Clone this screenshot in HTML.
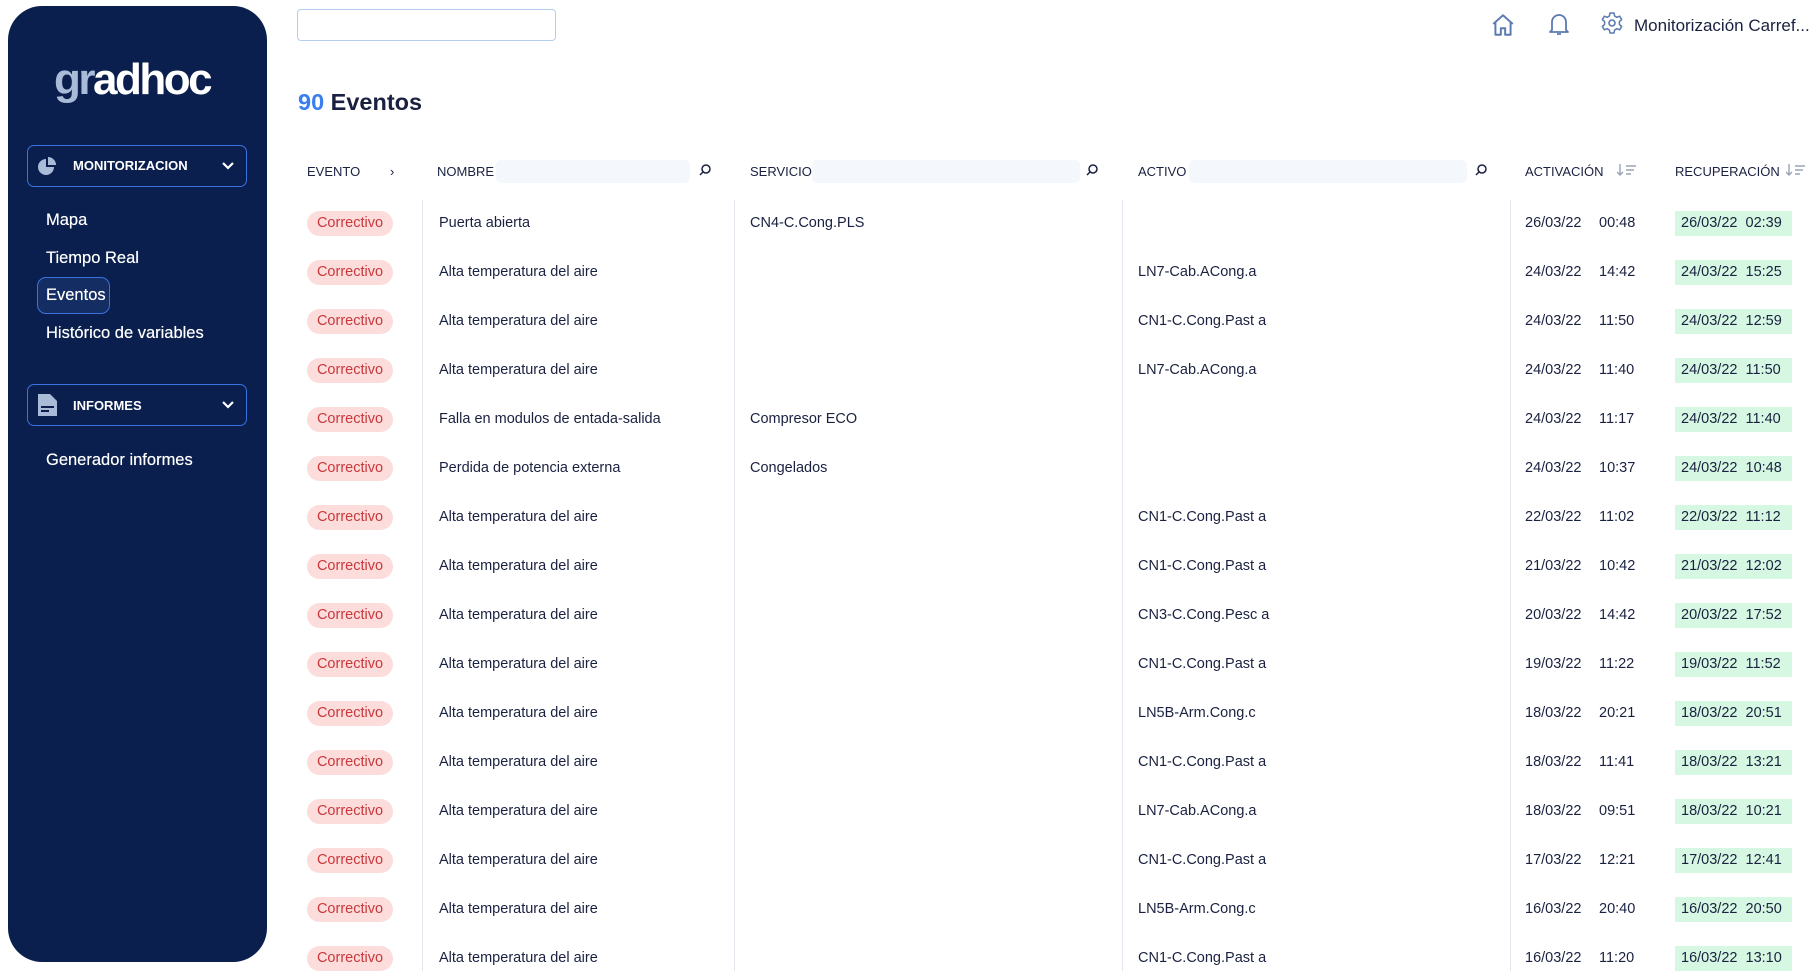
<!DOCTYPE html>
<html><head><meta charset="utf-8"><style>
*{margin:0;padding:0;box-sizing:border-box}
body{width:1819px;height:971px;overflow:hidden;background:#fff;font-family:"Liberation Sans",sans-serif;color:#1a2140;position:relative}
.a{position:absolute;white-space:nowrap}
#sb{position:absolute;left:8px;top:6px;width:259px;height:956px;background:#0a1f4e;border-radius:34px}
.btn{position:absolute;left:27px;width:220px;height:42px;border:1.5px solid #3a72e0;border-radius:7px;color:#fff;font-weight:bold;font-size:13px}
.nav{position:absolute;left:46px;color:#fff;font-size:16.5px;text-shadow:0 0 0.4px #fff}
.hd{font-size:13px;color:#1a2140;top:164px}
.fi{position:absolute;top:160px;height:23px;background:#f4f7fb;border-radius:5px}
.si{position:absolute;top:163px}
.vl{position:absolute;top:200px;width:1px;height:771px;background:#e3e6ec}
.row{position:absolute;left:0;width:1819px;height:26px;font-size:14.5px}
.row span{position:absolute;top:4px}
.bad{position:absolute;left:307px;top:0;width:86px;height:25px;border-radius:13px;background:#fddcdc;color:#c9383a;text-align:center;line-height:25px;font-size:14.5px}
.rec{position:absolute;left:1675px;top:0;height:25px;background:#d6f8e2;line-height:25px;padding-left:6px;width:117px}
</style></head><body>
<div id="sb"></div>
<div class="a" style="left:54px;top:55px;font-size:44px;font-weight:bold;color:#fff;letter-spacing:-2.5px"><span style="color:#a9bbd6">gr</span>adhoc</div>
<div class="btn" style="top:145px">
<svg class="a" style="left:9px;top:10px" width="20" height="20" viewBox="0 0 20 20"><path d="M9 3A8 8 0 1 0 17 11H9Z" fill="#a9bbd6"/><path d="M11 1A8 8 0 0 1 19 9H11Z" fill="#a9bbd6"/></svg>
<span class="a" style="left:45px;top:12px">MONITORIZACION</span>
<svg class="a" style="left:193px;top:14px" width="14" height="12" viewBox="0 0 14 12"><path d="M2 3l5 5 5-5" stroke="#fff" stroke-width="2.2" fill="none"/></svg></div>
<div class="nav" style="top:211px">Mapa</div>
<div class="nav" style="top:249px">Tiempo Real</div>
<div class="a" style="left:37px;top:277px;width:73px;height:37px;border:1.5px solid #3a72e0;border-radius:9px;background:#142d63"></div>
<div class="nav" style="top:286px">Eventos</div>
<div class="nav" style="top:324px">Histórico de variables</div>
<div class="btn" style="top:384px">
<svg class="a" style="left:10px;top:9px" width="20" height="22" viewBox="0 0 20 22"><path d="M0 0h12l7 7v15H0Z" fill="#a9bbd6"/><path d="M3 13h13M3 17h8" stroke="#0a1f4e" stroke-width="2"/></svg>
<span class="a" style="left:45px;top:13px">INFORMES</span>
<svg class="a" style="left:193px;top:14px" width="14" height="12" viewBox="0 0 14 12"><path d="M2 3l5 5 5-5" stroke="#fff" stroke-width="2.2" fill="none"/></svg></div>
<div class="nav" style="top:451px">Generador informes</div>

<div class="a" style="left:297px;top:9px;width:259px;height:32px;border:1.5px solid #b3cdef;border-radius:4px"></div>
<svg class="a" style="left:1490px;top:12px" width="26" height="26" viewBox="0 0 24 24"><path d="M3 11L12 3l9 8M5 9v12h5v-6h4v6h5V9" stroke="#5a7ab0" stroke-width="1.8" fill="none" stroke-linejoin="round"/></svg>
<svg class="a" style="left:1547px;top:11px" width="24" height="26" viewBox="0 0 24 26"><path d="M5 19V11a7 7 0 0 1 14 0v8l2 2H3ZM10 23h4" stroke="#5a7ab0" stroke-width="1.8" fill="none" stroke-linejoin="round"/></svg>
<svg class="a" style="left:1600px;top:11px" width="24" height="24" viewBox="0 0 24 24"><circle cx="12" cy="12" r="3" stroke="#5a7ab0" stroke-width="1.6" fill="none"/><path d="M10 2h4l.6 3 2.3 1.3 2.8-1.1 2 3.4-2.3 2v2.8l2.3 2-2 3.4-2.8-1.1-2.3 1.3L14 22h-4l-.6-3-2.3-1.3-2.8 1.1-2-3.4 2.3-2v-2.8l-2.3-2 2-3.4 2.8 1.1L9.4 5Z" stroke="#5a7ab0" stroke-width="1.5" fill="none" stroke-linejoin="round"/></svg>
<div class="a" style="left:1634px;top:16px;font-size:17px;color:#1a2140">Monitorización Carref...</div>

<div class="a" style="left:298px;top:89px;font-size:23.5px;font-weight:bold"><span style="color:#3a7ef0">90</span> Eventos</div>

<div class="a hd" style="left:307px">EVENTO</div>
<div class="a hd" style="left:390px">›</div>
<div class="a hd" style="left:437px">NOMBRE</div><div class="fi" style="left:496px;width:194px"></div>
<div class="a hd" style="left:750px">SERVICIO</div><div class="fi" style="left:812px;width:268px"></div>
<div class="a hd" style="left:1138px">ACTIVO</div><div class="fi" style="left:1189px;width:278px"></div>
<svg class="si" style="left:698px" width="14" height="14" viewBox="0 0 14 14"><circle cx="8" cy="6" r="4" stroke="#1a2140" stroke-width="1.5" fill="none"/><path d="M5 9l-3 3" stroke="#1a2140" stroke-width="1.5"/></svg>
<svg class="si" style="left:1085px" width="14" height="14" viewBox="0 0 14 14"><circle cx="8" cy="6" r="4" stroke="#1a2140" stroke-width="1.5" fill="none"/><path d="M5 9l-3 3" stroke="#1a2140" stroke-width="1.5"/></svg>
<svg class="si" style="left:1474px" width="14" height="14" viewBox="0 0 14 14"><circle cx="8" cy="6" r="4" stroke="#1a2140" stroke-width="1.5" fill="none"/><path d="M5 9l-3 3" stroke="#1a2140" stroke-width="1.5"/></svg>
<div class="a hd" style="left:1525px">ACTIVACIÓN</div>
<svg class="si" style="left:1617px" width="20" height="14" viewBox="0 0 20 14"><path d="M3 1v11M0 9l3 3 3-3M9 3h10M9 7h8M9 11h5" stroke="#9aa3b5" stroke-width="1.4" fill="none"/></svg>
<div class="a hd" style="left:1675px">RECUPERACIÓN</div>
<svg class="si" style="left:1786px" width="20" height="14" viewBox="0 0 20 14"><path d="M3 1v11M0 9l3 3 3-3M9 3h10M9 7h8M9 11h5" stroke="#9aa3b5" stroke-width="1.4" fill="none"/></svg>
<div class="vl" style="left:422px"></div><div class="vl" style="left:734px"></div><div class="vl" style="left:1122px"></div><div class="vl" style="left:1510px"></div>

<div id="rows"></div>
<script>
var d=[["Puerta abierta","CN4-C.Cong.PLS","","26/03/22","00:48","26/03/22","02:39"],
["Alta temperatura del aire","","LN7-Cab.ACong.a","24/03/22","14:42","24/03/22","15:25"],
["Alta temperatura del aire","","CN1-C.Cong.Past a","24/03/22","11:50","24/03/22","12:59"],
["Alta temperatura del aire","","LN7-Cab.ACong.a","24/03/22","11:40","24/03/22","11:50"],
["Falla en modulos de entada-salida","Compresor ECO","","24/03/22","11:17","24/03/22","11:40"],
["Perdida de potencia externa","Congelados","","24/03/22","10:37","24/03/22","10:48"],
["Alta temperatura del aire","","CN1-C.Cong.Past a","22/03/22","11:02","22/03/22","11:12"],
["Alta temperatura del aire","","CN1-C.Cong.Past a","21/03/22","10:42","21/03/22","12:02"],
["Alta temperatura del aire","","CN3-C.Cong.Pesc a","20/03/22","14:42","20/03/22","17:52"],
["Alta temperatura del aire","","CN1-C.Cong.Past a","19/03/22","11:22","19/03/22","11:52"],
["Alta temperatura del aire","","LN5B-Arm.Cong.c","18/03/22","20:21","18/03/22","20:51"],
["Alta temperatura del aire","","CN1-C.Cong.Past a","18/03/22","11:41","18/03/22","13:21"],
["Alta temperatura del aire","","LN7-Cab.ACong.a","18/03/22","09:51","18/03/22","10:21"],
["Alta temperatura del aire","","CN1-C.Cong.Past a","17/03/22","12:21","17/03/22","12:41"],
["Alta temperatura del aire","","LN5B-Arm.Cong.c","16/03/22","20:40","16/03/22","20:50"],
["Alta temperatura del aire","","CN1-C.Cong.Past a","16/03/22","11:20","16/03/22","13:10"]];
var h="";d.forEach(function(r,i){var t=211+i*49.03;
h+='<div class="row" style="top:'+t+'px"><div class="bad">Correctivo</div><span style="left:439px">'+r[0]+'</span><span style="left:750px">'+r[1]+'</span><span style="left:1138px">'+r[2]+'</span><span style="left:1525px">'+r[3]+'</span><span style="left:1599px">'+r[4]+'</span><div class="rec">'+r[5]+'&nbsp;&nbsp;'+r[6]+'</div></div>';});
document.getElementById("rows").innerHTML=h;
</script>
</body></html>
